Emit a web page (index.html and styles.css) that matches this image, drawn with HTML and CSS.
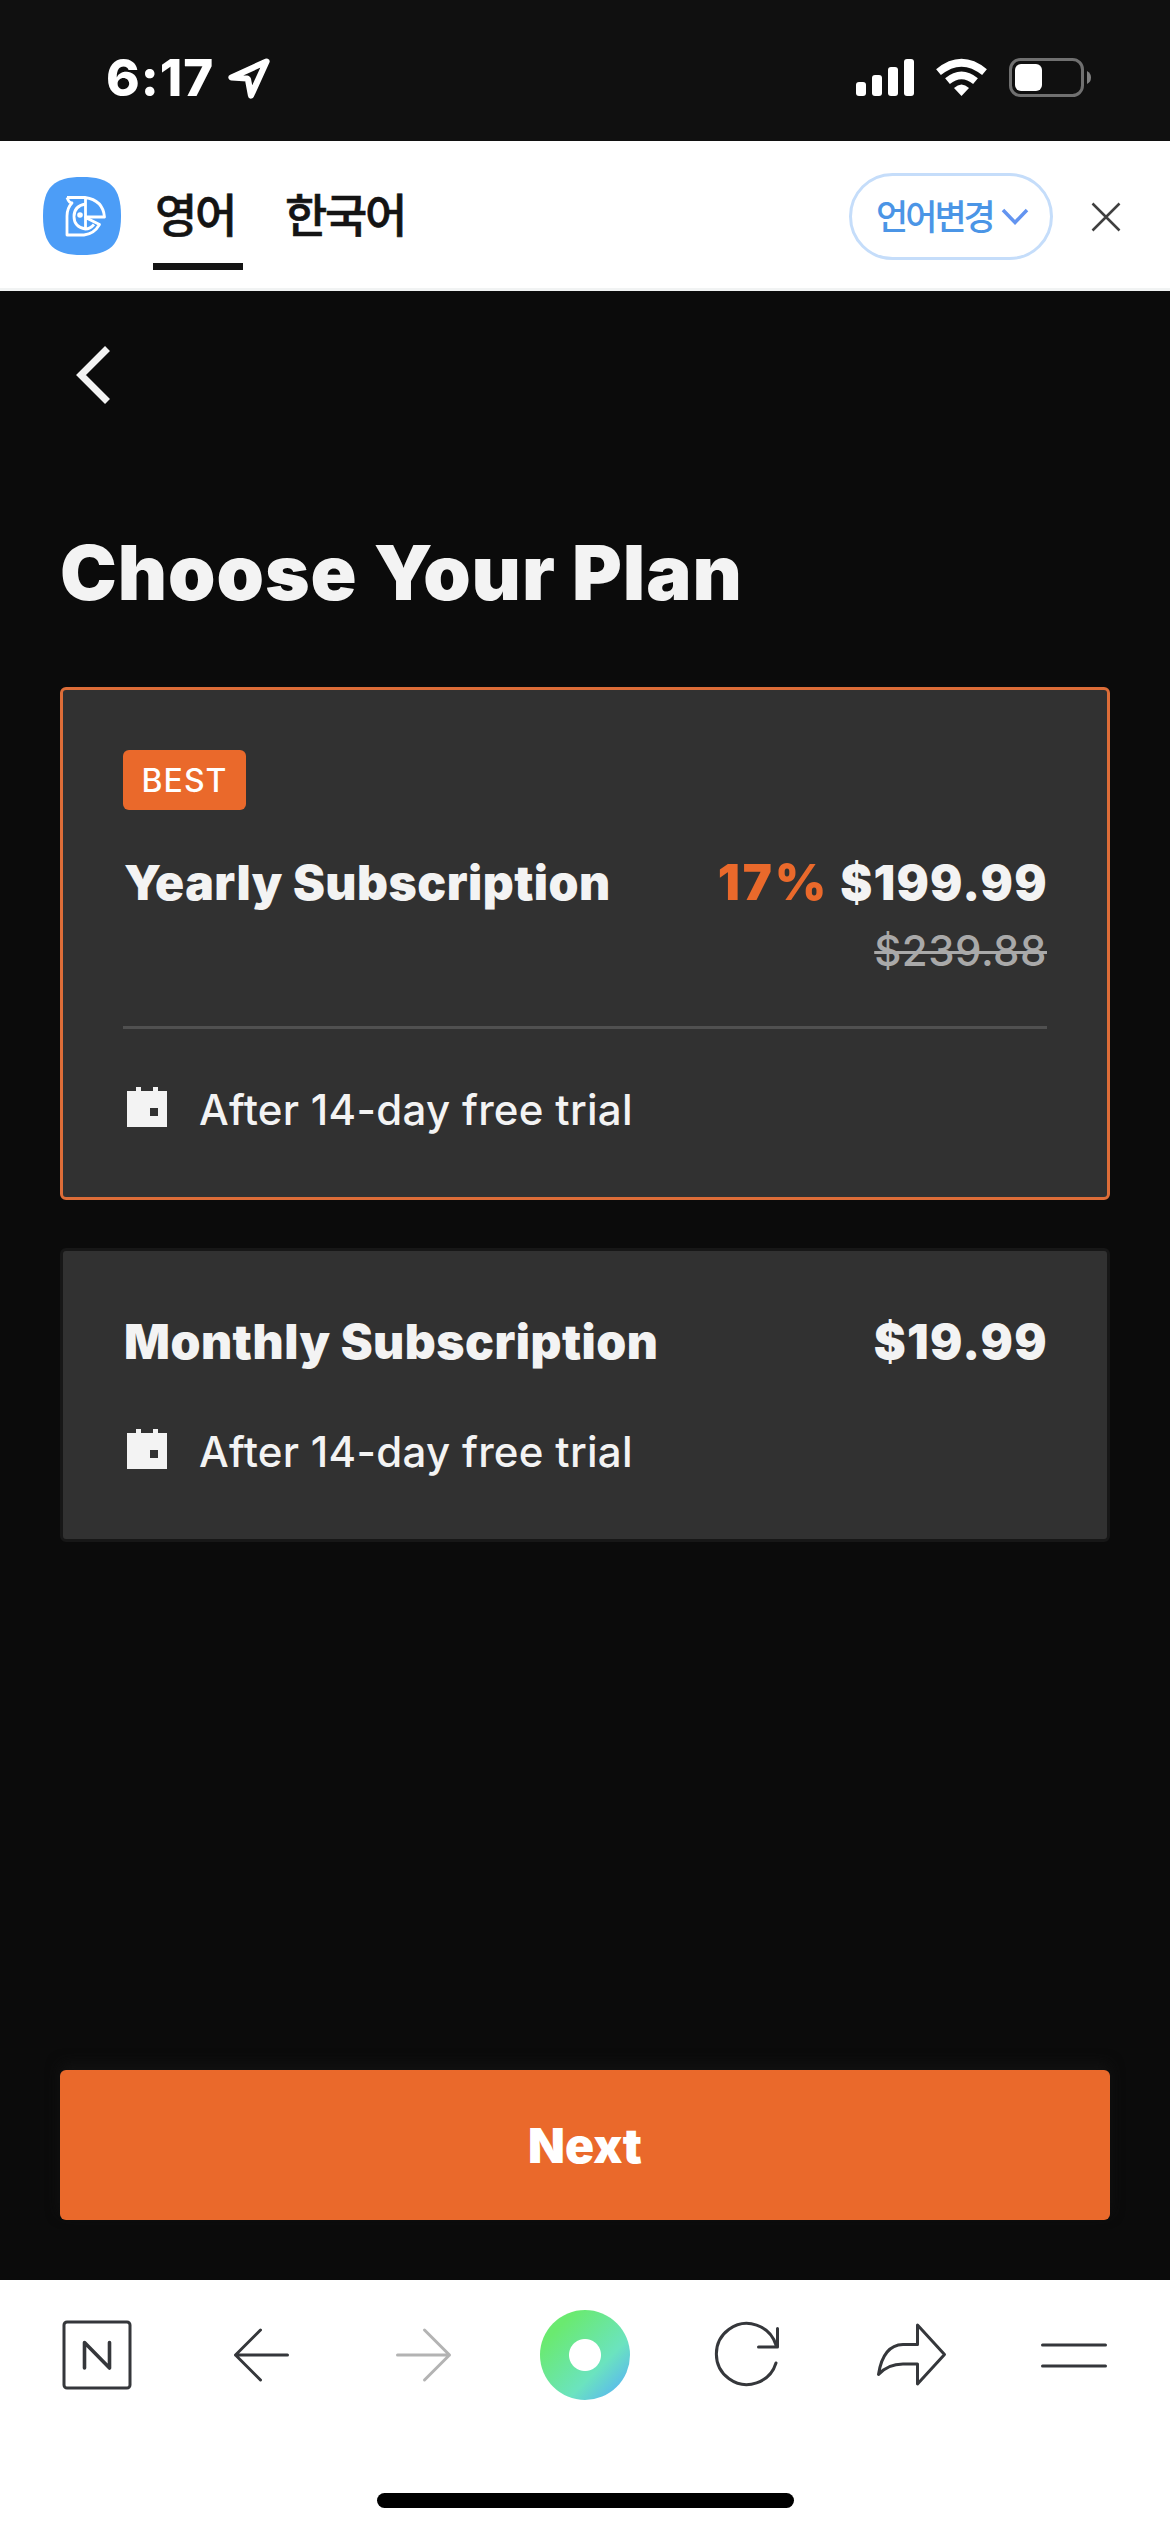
FILE: index.html
```html
<!DOCTYPE html>
<html lang="ko">
<head>
<meta charset="utf-8">
<title>Choose Your Plan</title>
<link rel="stylesheet" href="styles.css">
</head>
<body>
<div class="screen">
  <header class="status">
    <div class="status-left">
      <span class="time">6:17</span>
      <svg class="location" width="44" height="44" viewBox="0 0 44 44"><path d="M39.500 4.500 4.500 20.500 20 21.500 21 22.500 24 38.500Z" fill="none" stroke="#fff" stroke-width="6.200" stroke-linejoin="round"/></svg>
    </div>
    <svg class="status-icons" width="238" height="42" viewBox="0 0 238 42">
      <g fill="#fff">
        <rect x="1" y="25" width="10" height="14" rx="3"/>
        <rect x="17" y="18" width="10" height="21" rx="3"/>
        <rect x="33" y="10" width="10" height="29" rx="3"/>
        <rect x="49" y="2" width="10" height="37" rx="3"/>
        <path d="M106.500 39 99 31Q106.500 24 114 31Z"/>
      </g>
      <g fill="none" stroke="#fff" stroke-width="7.500">
        <path d="M83.500 15.200Q106.500-3.700 129.500 15.200"/>
        <path d="M92.500 24.200Q106.500 12.700 120.500 24.200"/>
      </g>
      <rect x="155.500" y="2.500" width="72" height="36" rx="10" fill="none" stroke="#707070" stroke-width="3"/>
      <rect x="160" y="7" width="27" height="27" rx="6" fill="#fff"/>
      <path d="M232 14Q236 16 236 20.500T232 27Z" fill="#808080"/>
    </svg>
  </header>

  <nav class="translate">
    <svg class="app" width="78" height="78" viewBox="0 0 78 78">
      <path d="M39 0C67 0 78 10 78 39S67 78 39 78 0 68 0 39 11 0 39 0Z" fill="#4c9df7"/>
      <g fill="none" stroke="#fff" stroke-width="2.800" stroke-linejoin="round">
        <path d="M24 20.500H42Q60 23 61.500 40H42.500V20.500"/>
        <path d="M24 20.500Q26 26 29 26Q24 31 24 39V58H41Q51 57 56.500 47.500L42.500 40.500V52"/>
        <path d="M42.500 27Q31 29 31 39.500T42.500 52Q47 52 51 47.500"/>
      </g>
      <circle cx="37" cy="38" r="2.800" fill="#fff"/>
    </svg>
    <div class="tabs">
      <span class="tab active">영어</span>
      <span class="tab">한국어</span>
    </div>
    <button class="language"><span class="language-label">언어변경</span><svg width="28" height="20" viewBox="0 0 28 20"><path d="M2 3 14 15.500 26 3" fill="none" stroke="#6394f0" stroke-width="3.500"/></svg></button>
    <svg class="close" width="30" height="30" viewBox="0 0 30 30"><path d="M1.500 1.500l27 27M28.500 1.500l-27 27" stroke="#404040" stroke-width="2.500"/></svg>
  </nav>

  <main class="content">
    <div class="back"><svg width="36" height="60" viewBox="0 0 36 60"><path d="M32.500 3.500 6 30 32.500 56.500" fill="none" stroke="#f3f3f3" stroke-width="7"/></svg></div>
    <h1 class="title">Choose Your Plan</h1>

    <section class="card selected">
      <span class="badge">BEST</span>
      <div class="row">
        <h2 class="name">Yearly Subscription</h2>
        <div class="price"><span class="discount">17%</span><span class="amount">$199.99</span></div>
      </div>
      <div class="was">$239.88</div>
      <div class="divider"></div>
      <div class="trial">
        <svg width="40" height="40" viewBox="0 0 40 40"><path fill="#f3f3f3" fill-rule="evenodd" d="M0 4h9V0h5v4h12V0h5v4h9v36H0ZM23 21v8h8v-8Z"/></svg>
        <span>After 14-day free trial</span>
      </div>
    </section>

    <section class="card monthly">
      <div class="row">
        <h2 class="name">Monthly Subscription</h2>
        <div class="price"><span class="amount">$19.99</span></div>
      </div>
      <div class="trial">
        <svg width="40" height="40" viewBox="0 0 40 40"><path fill="#f3f3f3" fill-rule="evenodd" d="M0 4h9V0h5v4h12V0h5v4h9v36H0ZM23 21v8h8v-8Z"/></svg>
        <span>After 14-day free trial</span>
      </div>
    </section>

    <button class="next">Next</button>
  </main>

  <footer class="browser">
    <div class="tools">
      <svg width="72" height="96" viewBox="-1 0 72 96"><g fill="none" stroke="#35373b" stroke-linejoin="round" stroke-linecap="round"><rect x="3" y="15" width="66" height="66" rx="3" stroke-width="3"/><path d="M23.500 61V35.500L48.500 61V35.500" stroke-width="3.600"/></g></svg>
      <svg width="58" height="96" viewBox="-2.500 0 58 96"><path d="M28 23 3 48 28 73M3 48H55" fill="none" stroke="#35373b" stroke-width="3" stroke-linecap="round" stroke-linejoin="round"/></svg>
      <svg width="58" height="96" viewBox="-1.500 0 58 96"><path d="M30 23 55 48 30 73M55 48H3" fill="none" stroke="#b3b3b3" stroke-width="3" stroke-linecap="round" stroke-linejoin="round"/></svg>
      <span class="dot"></span>
      <svg width="66" height="96" viewBox="1 0 66 96"><path d="M62 56A30.500 30.500 0 1 1 62 38M63.500 21.500V40H44.500" fill="none" stroke="#35373b" stroke-width="3" stroke-linecap="round" stroke-linejoin="round"/></svg>
      <svg width="70" height="96" viewBox="0 0 70 96"><path d="M41.500 18 68.500 47.500 41.500 77V57H27Q12 57 2.500 67.500Q7 38 27 37.500H41.500Z" fill="none" stroke="#35373b" stroke-width="3" stroke-linejoin="round"/></svg>
      <svg width="68" height="96" viewBox="0 0 68 96"><path d="M2.500 38H65.500M2.500 59H65.500" stroke="#35373b" stroke-width="3" stroke-linecap="round"/></svg>
    </div>
    <div class="home"></div>
  </footer>
</div>
</body>
</html>
```

FILE: styles.css
```css
* { box-sizing: border-box; }
body { margin: 0; background: #0b0b0b; font-family: Inter, "Noto Sans CJK KR", sans-serif; }
svg { display: block; flex: none; overflow: visible; }
button { border: 0; padding: 0; font: inherit; }

.screen { width: 1170px; height: 2532px; display: flex; flex-direction: column; }

.status { height: 141px; flex: none; background: #101010; display: flex; justify-content: space-between; padding: 57px 77px 0 106px; }
.status-left { display: flex; }
.time { width: 121px; color: #fff; font-size: 51px; font-weight: 800; line-height: 42px; letter-spacing: 1px; }

.translate { height: 150px; flex: none; background: #fff; border-bottom: 3px solid #f1f3f3; display: flex; align-items: flex-start; padding: 0 49px 0 43px; }
.app { margin-top: 36px; }
.tabs { display: flex; gap: 40px; margin-left: 32px; flex: 1; }
.tab { font-family: "Noto Sans CJK KR", sans-serif; font-size: 46px; font-weight: 500; line-height: 60px; padding: 41px 2px 21px; height: 129px; color: #141414; letter-spacing: -2.3px; white-space: nowrap; -webkit-text-stroke: 0.6px; }
.tab.active { width: 90px; border-bottom: 7px solid #141414; }
.language { margin-top: 32px; width: 204px; height: 87px; border: 3px solid #c5ddfa; border-radius: 44px; background: #fff; display: flex; align-items: center; padding-left: 24px; gap: 8px; color: #4b95e6; font-family: "Noto Sans CJK KR", sans-serif; font-weight: 500; font-size: 35px; letter-spacing: -3px; white-space: nowrap; }
.language-label { margin-top: -5px; }
.close { margin: 61px 0 0 38px; }

.content { flex: 1; display: flex; flex-direction: column; padding: 0 60px 60px; background: #0b0b0b; color: #f3f3f3; }
.back { height: 168px; padding: 54px 0 0 15px; }
.title { margin: 63px 0 65px; font-size: 76px; font-weight: 900; line-height: 100px; letter-spacing: 0.95px; white-space: nowrap; }

.card { flex: none; background: #313131; border: 3px solid #171717; border-radius: 6px; padding: 60px 60px 57px; }
.card.selected { border-color: #dd6d38; height: 513px; }
.card.monthly { margin-top: 48px; padding-top: 61px; height: 294px; }
.badge { display: flex; align-items: center; justify-content: center; width: 123px; height: 60px; border-radius: 6px; background: #ea692b; color: #fff; font-size: 32px; font-weight: 500; letter-spacing: 1px; }
.row { display: flex; justify-content: space-between; line-height: 60px; white-space: nowrap; }
.selected .row { margin-top: 43px; }
.name { margin: 0 0 0 1px; font-size: 48px; font-weight: 900; letter-spacing: 0.5px; }
.price { display: flex; gap: 11px; font-size: 48px; font-weight: 900; letter-spacing: 1.3px; }
.discount { color: #ea692b; font-size: 49px; letter-spacing: 3px; }
.amount { margin-right: -1px; }
.was { margin-top: 8px; line-height: 60px; font-size: 42px; font-weight: 500; letter-spacing: 0.5px; color: #a9a9a9; text-align: right; text-decoration: line-through; text-decoration-thickness: 3px; }
.divider { margin-top: 45px; height: 3px; background: #505050; }
.trial { display: flex; gap: 32px; padding-left: 4px; margin-top: 51px; line-height: 60px; font-size: 42px; font-weight: 500; letter-spacing: 0.3px; white-space: nowrap; }
.trial svg { margin-top: 7px; }
.monthly .trial { margin-top: 50px; }

.next { margin-top: auto; height: 150px; flex: none; border-radius: 6px; background: #ea692b; color: #fff; font-size: 48px; font-weight: 900; box-shadow: 0 -6px 14px #121212; }

.browser { height: 252px; flex: none; background: #fff; display: flex; flex-direction: column; align-items: center; }
.tools { align-self: stretch; height: 96px; margin-top: 27px; padding: 0 14.5px; display: grid; grid-template-columns: repeat(7, 1fr); justify-items: center; align-items: center; }
.dot { width: 90px; height: 90px; border-radius: 50%; background: radial-gradient(circle, #fff 15.5px, transparent 16.5px), linear-gradient(135deg, #6aea70 20%, #6be3bf 65%, #5ab9ee 90%); }
.home { width: 417px; height: 15px; border-radius: 8px; background: #000; margin-top: 90px; }
```
